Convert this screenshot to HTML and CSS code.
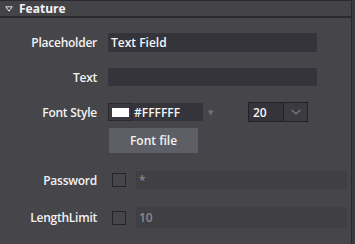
FILE: index.html
```html
<!DOCTYPE html>
<html>
<head>
<meta charset="utf-8">
<link rel="stylesheet" href="styles.css">
</head>
<body>
<div class="shell">
  <div class="panel">
    <div class="header"><svg class="tri" width="8" height="6" viewBox="0 0 8 6"><path d="M0.8 0.8 L7.2 0.8 L4 5.2 Z" fill="none" stroke="#e6e6e6" stroke-width="1"/></svg><span class="title">Feature</span></div>
    <div class="rows">
      <div class="row r1">
        <label class="lbl">Placeholder</label>
        <div class="input wide">Text Field</div>
      </div>
      <div class="row r2">
        <label class="lbl">Text</label>
        <div class="input wide"></div>
      </div>
      <div class="row r3">
        <label class="lbl">Font Style</label>
        <div class="swatch"><span class="chip"></span></div>
        <div class="input hex">#FFFFFF</div>
        <span class="drop">&#9660;</span>
        <div class="num">20</div>
        <div class="numbtn"><svg width="10" height="6" viewBox="0 0 10 6"><path d="M0.5 0.8 L5 4.8 L9.5 0.8" fill="none" stroke="#8d8c92" stroke-width="1.1"/></svg></div>
      </div>
      <div class="row r4">
        <div class="btn">Font file</div>
      </div>
      <div class="row r5">
        <label class="lbl">Password</label>
        <span class="check"></span>
        <div class="field">*</div>
      </div>
      <div class="row r6">
        <label class="lbl">LengthLimit</label>
        <span class="check"></span>
        <div class="field">10</div>
      </div>
    </div>
  </div>
  <div class="edge"></div>
</div>
</body>
</html>
```
FILE: styles.css
```css
html, body {
  margin: 0;
  padding: 0;
  background: #46454a;
  font-family: "Open Sans", "DejaVu Sans", sans-serif;
  font-size: 12px;
  color: #f2f2f2;
}
.shell {
  display: flex;
  width: 355px;
  height: 244px;
  overflow: hidden;
}
.panel {
  width: 351px;
  border-right: 1px solid #29282c;
  box-sizing: content-box;
}
.edge {
  flex: 1;
  background: #3b3a3f;
}
.header {
  height: 15px;
  border-top: 1px solid #2b2a2f;
  border-bottom: 2px solid #2b2a2f;
  background: #444348;
  display: flex;
  align-items: center;
}
.tri {
  margin-left: 5px;
  margin-right: 6px;
  flex: none;
}
.title {
  font-weight: 700;
  font-size: 12px;
  color: #f4f4f4;
}
.rows {
  display: flex;
  flex-direction: column;
}
.row {
  display: flex;
  align-items: center;
}
.lbl {
  width: 97px;
  text-align: right;
  margin-right: 11px;
  font-weight: 600;
  letter-spacing: -0.25px;
  color: #f2f2f2;
  flex: none;
}
.r1 { margin-top: 15px; height: 19px; }
.r2 { margin-top: 16px; height: 18px; }
.r3 { margin-top: 16px; height: 20px; }
.r4 { margin-top: 6px; height: 25px; padding-left: 109px; }
.r5 { margin-top: 18px; height: 18px; }
.r6 { margin-top: 18px; height: 21px; }
.input {
  background: #35343a;
  height: 100%;
  box-sizing: border-box;
  display: flex;
  align-items: center;
  padding-left: 3px;
  font-weight: 600;
  color: #f6f6f6;
}
.wide { width: 209px; }
.r3 .swatch {
  width: 24px;
  height: 18px;
  box-sizing: border-box;
  border: 1px solid #2a292e;
  background: #3a393f;
  display: flex;
  align-items: center;
  justify-content: center;
  flex: none;
}
.chip {
  width: 17px;
  height: 9px;
  background: #ffffff;
}
.hex {
  width: 71px;
  height: 18px;
  padding-left: 2px;
}
.drop {
  font-size: 7px;
  color: #707075;
  margin-left: 5px;
  width: 40px;
}
.num {
  width: 36px;
  height: 20px;
  box-sizing: border-box;
  border: 1px solid #222125;
  background: #35343a;
  font-weight: 600;
  padding-left: 4px;
  display: flex;
  align-items: center;
  color: #f6f6f6;
}
.numbtn {
  width: 24px;
  height: 20px;
  box-sizing: border-box;
  border: 1px solid #222125;
  border-left: none;
  background: #3c3b41;
  display: flex;
  align-items: center;
  justify-content: center;
}
.btn {
  width: 89px;
  height: 25px;
  background: #5e5f66;
  color: #f2f2f2;
  font-weight: 600;
  display: flex;
  align-items: center;
  justify-content: center;
}
.check {
  width: 14px;
  height: 14px;
  box-sizing: border-box;
  border: 1px solid #242327;
  margin-left: 4px;
  margin-right: 10px;
  flex: none;
}
.field {
  width: 211px;
  height: 100%;
  background: #403f44;
  display: flex;
  align-items: center;
  padding-left: 3px;
  box-sizing: border-box;
  color: #8a898e;
  font-weight: 600;
}
```
